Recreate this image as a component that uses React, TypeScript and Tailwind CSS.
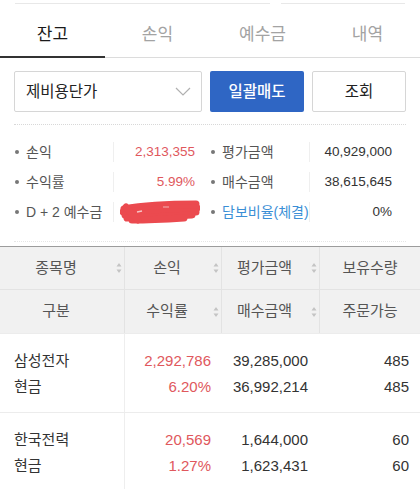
import React from "react";

const FONT = '"Liberation Sans", "Noto Sans CJK KR", sans-serif';

const tabs = ["잔고", "손익", "예수금", "내역"];

type InfoItem = {label: string; value?: string; color?: string; labelColor?: string; redacted?: boolean};

const infoRows: [InfoItem, InfoItem][] = [
  [
    {label: "손익", value: "2,313,355", color: "text-[#e0585d]"},
    {label: "평가금액", value: "40,929,000"},
  ],
  [
    {label: "수익률", value: "5.99%", color: "text-[#e0585d]"},
    {label: "매수금액", value: "38,615,645"},
  ],
  [
    {label: "D + 2 예수금", redacted: true},
    {label: "담보비율(체결)", value: "0%", labelColor: "text-[#3b8fd6]"},
  ],
];

const holdings = [
  {name: "삼성전자", kind: "현금", pl: "2,292,786", rate: "6.20%", evalAmt: "39,285,000", buyAmt: "36,992,214", qty: "485", avail: "485"},
  {name: "한국전력", kind: "현금", pl: "20,569", rate: "1.27%", evalAmt: "1,644,000", buyAmt: "1,623,431", qty: "60", avail: "60"},
];

// tiny up/down sort triangles
const SortIcon = () => (
  <svg width="6" height="12" viewBox="0 0 6 12" className="block">
    <path d="M3 1 L5.5 4.5 L0.5 4.5 Z" fill="#c4c4c4" />
    <path d="M3 11 L5.5 7.5 L0.5 7.5 Z" fill="#c4c4c4" />
  </svg>
);

// red marker scribble over the hidden value
const Scribble = () => (
  <svg width="80" height="24" viewBox="0 0 80 24" className="block">
    <g stroke="#eb4a4f" strokeLinecap="round" strokeWidth="7" fill="none">
      <path d="M4 9 C 20 6, 45 4, 76 4" />
      <path d="M3 12 C 25 10, 50 8, 77 8" />
      <path d="M5 15 C 28 13, 52 12, 76 12" />
      <path d="M7 18 C 28 17, 50 16, 72 15" />
      <path d="M12 20 C 30 20, 48 19, 64 18" />
      <path d="M6 7 L 18 20" />
    </g>
    <path d="M17 12 L22 11" stroke="#f6c4c4" strokeWidth="1.5" />
    <path d="M43 7 L49 7" stroke="#f1a3a3" strokeWidth="1.2" />
  </svg>
);

const InfoCell = ({item, valueWidth}: {item: InfoItem; valueWidth: string}) => (
  <div className="flex items-center h-[30px]">
    <div className="w-[99px] flex items-center">
      <span className="w-[4px] h-[4px] rounded-full bg-[#777] ml-[1px] mr-[7px]" />
      <span className={`text-[14px] ${item.labelColor ?? "text-[#555]"}`}>{item.label}</span>
    </div>
    <div className={`${valueWidth} h-[20px] flex items-center justify-end border-l border-[#efefef]`}>
      {item.redacted ? (
        <div className="-mr-[5px]">
          <Scribble />
        </div>
      ) : (
        <span className={`text-[13.5px] ${item.color ?? "text-[#333]"}`}>{item.value}</span>
      )}
    </div>
  </div>
);

const HeadCell = ({label, sort, width, last}: {label: string; sort?: boolean; width: string; last?: boolean}) => (
  <div className={`${width} flex items-center ${last ? "" : "border-r border-[#e3e3e3]"}`}>
    <span className="flex-1 text-center">{label}</span>
    {!last && <span className="w-[12px] flex justify-end pr-[2px]">{sort && <SortIcon />}</span>}
  </div>
);

const App = () => {
  return (
    <div className="w-[420px] h-[489px] bg-white overflow-hidden" style={{fontFamily: FONT}}>
      {/* bottom edge of boxes above */}
      <div className="h-[4px] flex px-[15px] gap-[11px]">
        <div className="w-[257px] border-b border-[#e8e8e8]" />
        <div className="w-[125px] border-b border-[#e8e8e8]" />
      </div>

      {/* tabs */}
      <div className="flex h-[54px] border-b border-[#dcdcdc]">
        {tabs.map((t, i) => (
          <div
            key={t}
            className={`flex-1 flex items-center justify-center pt-[10px] text-[17px] border-b-2 -mb-px ${
              i === 0 ? "border-[#333] text-[#1a1a1a]" : "border-transparent text-[#a3a3a3]"
            }`}
          >
            {t}
          </div>
        ))}
      </div>

      {/* controls */}
      <div className="flex gap-[8px] px-[14px] pt-[13px]">
        <div className="w-[188px] h-[41px] border border-[#d6d6d6] rounded-[2px] flex items-center justify-between pl-[11px] pr-[10px]">
          <span className="text-[15.5px] text-[#222]">제비용단가</span>
          <svg width="16" height="9" viewBox="0 0 16 9">
            <path d="M1 1 L8 8 L15 1" fill="none" stroke="#b0b0b0" strokeWidth="1.2" />
          </svg>
        </div>
        <button className="w-[94px] h-[41px] bg-[#2f66c4] rounded-[2px] text-white text-[15.5px] font-medium">일괄매도</button>
        <button className="w-[94px] h-[41px] border border-[#d6d6d6] rounded-[2px] text-[#222] text-[15.5px]">조회</button>
      </div>

      <div className="mx-[14px] mt-[12px] border-t border-dotted border-[#d8d8d8]" />

      {/* summary */}
      <div className="pl-[14px] pt-[12px] flex flex-col">
        {infoRows.map(([l, r], i) => (
          <div key={i} className="flex">
            <InfoCell item={l} valueWidth="w-[82px]" />
            <div className="w-[15px]" />
            <InfoCell item={r} valueWidth="w-[83px]" />
          </div>
        ))}
      </div>

      <div className="mx-[14px] mt-[14px] border-t border-dotted border-[#e6e6e6]" />

      {/* table */}
      <div className="mt-[4px] border-t border-[#9c9c9c]">
        <div className="bg-[#f1f1f1] text-[15px] text-[#555]">
          <div className="flex h-[43px] border-b border-[#e3e3e3]">
            <HeadCell label="종목명" sort width="w-[125px]" />
            <HeadCell label="손익" sort width="w-[97px]" />
            <HeadCell label="평가금액" sort width="w-[98px]" />
            <HeadCell label="보유수량" width="flex-1" last />
          </div>
          <div className="flex h-[43px]">
            <HeadCell label="구분" width="w-[125px]" />
            <HeadCell label="수익률" sort width="w-[97px]" />
            <HeadCell label="매수금액" sort width="w-[98px]" />
            <HeadCell label="주문가능" width="flex-1" last />
          </div>
        </div>

        {holdings.map(h => (
          <div key={h.name} className="flex h-[79px] border-t border-[#ececec] text-[15px] text-[#333]">
            <div className="w-[125px] pl-[14px] pt-[14px] border-r border-[#eeeeee] flex flex-col">
              <span className="h-[26px] leading-[26px]">{h.name}</span>
              <span className="h-[26px] leading-[26px]">{h.kind}</span>
            </div>
            <div className="w-[97px] pr-[11px] pt-[14px] flex flex-col items-end text-[#e0585d]">
              <span className="h-[26px] leading-[26px]">{h.pl}</span>
              <span className="h-[26px] leading-[26px]">{h.rate}</span>
            </div>
            <div className="w-[98px] pr-[12px] pt-[14px] flex flex-col items-end">
              <span className="h-[26px] leading-[26px]">{h.evalAmt}</span>
              <span className="h-[26px] leading-[26px]">{h.buyAmt}</span>
            </div>
            <div className="flex-1 pr-[11px] pt-[14px] flex flex-col items-end">
              <span className="h-[26px] leading-[26px]">{h.qty}</span>
              <span className="h-[26px] leading-[26px]">{h.avail}</span>
            </div>
          </div>
        ))}
      </div>
    </div>
  );
};

export default App;
